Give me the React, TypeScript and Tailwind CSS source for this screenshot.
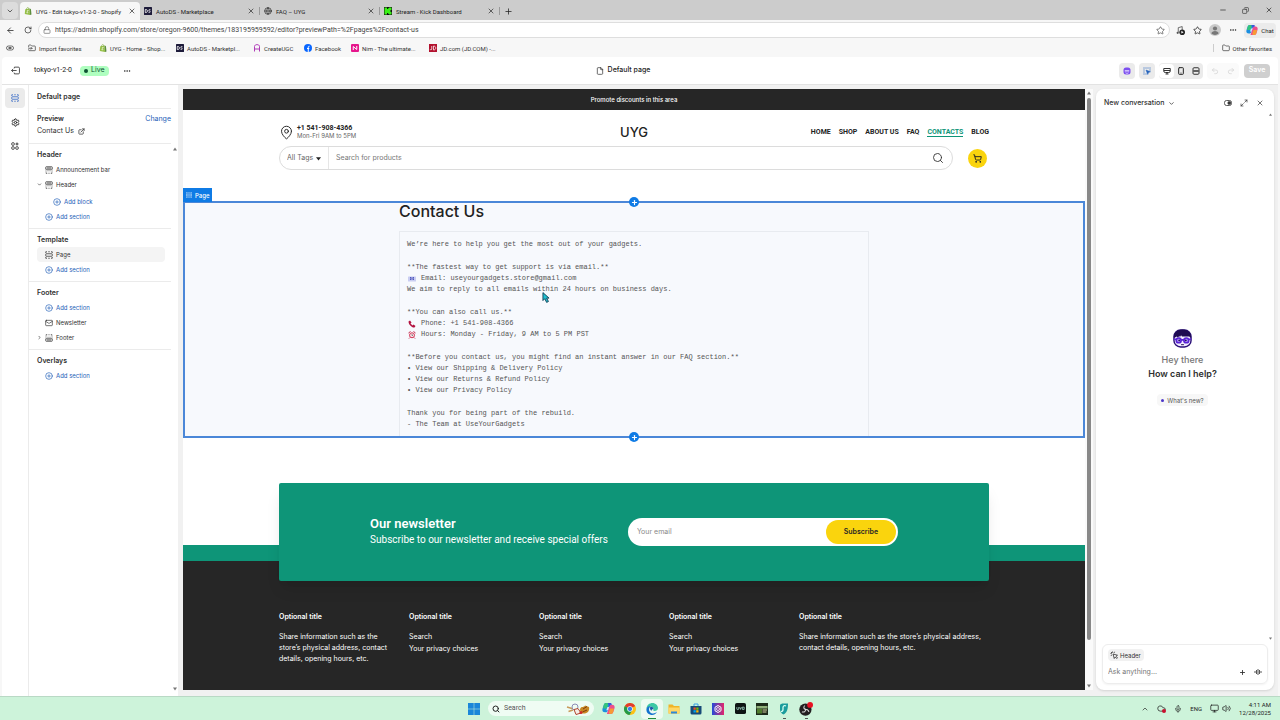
import React, { useState } from "react";
import {
  ArrowLeft,
  ChevronDown,
  ChevronRight,
  ChevronUp,
  CirclePlus,
  Cloud,
  Copy,
  Ellipsis,
  ExternalLink,
  File,
  Folder,
  FolderInput,
  Globe,
  Lock,
  Mail,
  MapPin,
  Maximize2,
  Mic,
  Minus,
  Monitor,
  Plus,
  Redo2,
  RotateCw,
  Search,
  Settings,
  ShoppingCart,
  Smartphone,
  Star,
  Undo2,
  Volume2,
  X,
} from "lucide-react";

interface IconProps {
  className?: string;
}

/* ---------- Icons ---------- */

const ShopifyIcon = ({ className = "size-2" }: IconProps) => (
  <svg viewBox="0 0 16 16" className={className}>
    <path d="M2.500 4.500 11 3l1 13-10.500-1.800z" fill="#95bf47" />
    <path d="M11 3l2.800 1.200L15 15l-3 1z" fill="#5e8e3e" />
    <path d="M5 5c0-5 4.500-5.500 4.500-1.200" fill="none" stroke="#7aa83a" strokeWidth="1.200" />
    <path d="M9 7c-3-1-3.500 1.500-2 2.300 2 1.200.5 3-2 1.800" fill="none" stroke="#fff" strokeWidth="1.400" />
  </svg>
);

const AutoDsIcon = ({ className = "size-2" }: IconProps) => (
  <svg viewBox="0 0 16 16" className={className}>
    <rect width="16" height="16" rx="1" fill="#1d1b3a" />
    <path d="M2.500 5v6h2c3 0 3-6 0-6zM13 5.500c-4-1.500-4.500 2-2 2.500s2 4-2 2.500" fill="none" stroke="#fff" strokeWidth="1.600" />
  </svg>
);

const KickIcon = ({ className = "size-2" }: IconProps) => (
  <svg viewBox="0 0 16 16" className={className}>
    <rect width="16" height="16" fill="#111" />
    <path d="M1 1h5v3h2V2.500h2V1h5v5h-2v4h2v5h-5v-1.500H8V12H6v3H1z" fill="#3bf018" />
  </svg>
);

const CopilotIcon = ({ className = "size-3" }: IconProps) => (
  <svg viewBox="0 0 24 24" className={className}>
    <path d="M8 2h7l-4 13c-1 3-2 4-5 4-5 0-6-3-5-7l2-6c1-3 2-4 5-4z" fill="#1a8fe0" />
    <path d="M8 2c3 0 4 1 3 4l-2 6H2l1-5c1-4 2-5 5-5z" fill="#35c47c" />
    <path d="M16 22H9l4-13c1-3 2-4 5-4 5 0 6 3 5 7l-2 6c-1 3-2 4-5 4z" fill="#ee4e8b" />
    <path d="M16 22c-3 0-4-1-3-4l2-6h7l-1 5c-1 4-2 5-5 5z" fill="#f79a35" />
    <path d="M11 2h4c2 0 3 1 3.500 3-3 0-4 1-5 4z" fill="#3a55d8" />
    <path d="M10 9h3l-2 6H8z" fill="#fff" opacity=".8" />
  </svg>
);

const SectionIcon = ({ className = "size-2" }: IconProps) => (
  <svg viewBox="0 0 16 16" className={className} fill="none" stroke="currentColor" strokeWidth="1.500">
    <path d="M1.500 4V1.500H4M6.500 1.500h3M12 1.500h2.500V4M1.500 12v2.500H4M6.500 14.500h3M12 14.500h2.500V12" />
    <rect x="1.500" y="5.500" width="13" height="5" rx="1" />
  </svg>
);

const HeaderIcon = ({ className = "size-2" }: IconProps) => (
  <svg viewBox="0 0 16 16" className={className} fill="none" stroke="currentColor" strokeWidth="1.500">
    <path d="M1.500 6.500v-4a1 1 0 0 1 1-1h11a1 1 0 0 1 1 1v4zM4 4h8" />
    <path d="M2 9v2M14 9v2M2 13v1.500h2.500M7 14.500h2M11.500 14.500H14V13M5 9.500h2M9 9.500h2" />
  </svg>
);

const FooterIcon = ({ className = "size-2" }: IconProps) => (
  <svg viewBox="0 0 16 16" className={className} fill="none" stroke="currentColor" strokeWidth="1.500">
    <path d="M1.500 9.500v4a1 1 0 0 0 1 1h11a1 1 0 0 0 1-1v-4zM4 12h8" />
    <path d="M2 7V5M14 7V5M2 3V1.500h2.500M7 1.500h2M11.500 1.500H14V3M5 6.500h2M9 6.500h2" />
  </svg>
);

const AppsIcon = ({ className = "size-2" }: IconProps) => (
  <svg viewBox="0 0 16 16" className={className} fill="none" stroke="currentColor" strokeWidth="1.700">
    <rect x="1.500" y="1.500" width="5" height="5" rx="1.500" />
    <rect x="1.500" y="9.500" width="5" height="5" rx="1.500" />
    <rect x="9.500" y="9.500" width="5" height="5" rx="1.500" />
    <path d="M12 1v6M9 4h6" />
  </svg>
);

const SidekickFace = ({ className = "size-[19px]" }: IconProps) => (
  <svg viewBox="0 0 40 40" className={className}>
    <rect x="2" y="2" width="36" height="36" rx="14" fill="#f1ecff" stroke="#2a0f78" strokeWidth="3" />
    <path d="M2 19C1 7 9 1 20 1s19 6 18 18l-4-3H19l-2-3-3 5v-4l-4 4-2-2z" fill="#1e0b52" />
    <g fill="#b79cff" stroke="#5a22d6" strokeWidth="3.500">
      <circle cx="12" cy="24" r="5" />
      <circle cx="28" cy="24" r="5" />
    </g>
    <path d="M17 23h6M2 21l5 1M38 21l-5 1" stroke="#5a22d6" strokeWidth="3.500" />
    <circle cx="13" cy="24" r="1.800" fill="#1e0b52" />
    <circle cx="27" cy="24" r="1.800" fill="#1e0b52" />
    <path d="M17 33h6" stroke="#1e0b52" strokeWidth="2" />
  </svg>
);

const SidekickOutline = () => (
  <svg viewBox="0 0 16 16" className="size-2">
    <rect x="1" y="1" width="14" height="14" rx="5" fill="#7c4ff0" />
    <path d="M3.500 6.500h9v2.500h-9z" fill="#e9e1ff" />
    <path d="M5 11.500c2 1.500 4 1.500 6 0" stroke="#fff" strokeWidth="1.300" fill="none" />
  </svg>
);

const InspectIcon = () => (
  <svg viewBox="0 0 16 16" className="size-2">
    <path d="M1 2h2M5 2h2M9 2h2M13 2h2M1 6h2M1 10h2M1 14h2M5 14h2M14 5v2" fill="none" stroke="#2463bc" strokeWidth="2" />
    <path d="M6 6l9 3.500-4 1.500-1.500 4z" fill="#2463bc" stroke="#2463bc" />
  </svg>
);

const SelectIcon = ({ className = "size-2" }: IconProps) => (
  <svg viewBox="0 0 16 16" className={className} fill="none" stroke="currentColor" strokeWidth="1.600">
    <path d="M5 1v2.500M1 5h2.500M2 2l2 2M9 1.500L8 4M1.500 9L4 8" />
    <path d="M6 6l2.500 9 2-3 3 3 1.500-1.500-3-3 3-2z" />
  </svg>
);

const Triangle = ({ className = "size-1" }: IconProps) => (
  <svg viewBox="0 0 8 8" className={className}>
    <path d="M0 7l4-6 4 6z" fill="#777" />
  </svg>
);

/* ---------- Browser chrome ---------- */

const tabs = [
  { title: "UYG - Edit tokyo-v1-2-0 - Shopify", icon: <ShopifyIcon className="size-2 shrink-0" />, active: true },
  { title: "AutoDS - Marketplace", icon: <AutoDsIcon /> },
  { title: "FAQ – UYG", icon: <Globe className="size-2" /> },
  { title: "Stream - Kick Dashboard", icon: <KickIcon /> },
];

const TabStrip = () => (
  <div className="flex h-5 items-end bg-[#cccccc] pl-[2px] text-[6px]">
    <button aria-label="Tab actions" className="mb-px grid h-[17px] w-4 place-items-center rounded bg-[#dcdcdc]">
      <ChevronDown className="size-2" />
    </button>
    <div className="ml-[2px] flex h-[18px]">
      {tabs.map((tab) => (
        <div
          key={tab.title}
          className={
            tab.active
              ? "flex w-[120px] items-center gap-1 rounded-t bg-[#f7f7f7] pr-1 pl-1"
              : "flex w-[120px] items-center gap-1 pl-1"
          }
        >
          {tab.icon}
          <span className="flex-1 whitespace-nowrap">{tab.title}</span>
          <button aria-label="Close tab">
            <X className="size-2" />
          </button>
          {!tab.active && <span className="h-2 w-px bg-[#999]" />}
        </div>
      ))}
      <button aria-label="New tab" className="ml-[2px] grid w-3 place-items-center">
        <Plus className="size-[9px]" />
      </button>
    </div>
    <div className="ml-auto flex h-full items-center">
      <button aria-label="Minimize" className="grid w-[23px] place-items-center"><Minus className="size-2" /></button>
      <button aria-label="Restore" className="grid w-[23px] place-items-center"><Copy className="size-[7px] -scale-x-100" /></button>
      <button aria-label="Close" className="grid w-[23px] place-items-center"><X className="size-2" /></button>
    </div>
  </div>
);

const AddressBar = () => (
  <div className="flex h-[19px] items-center bg-[#f7f7f7] pt-px pr-1 pl-[5px]">
    <button aria-label="Back" className="grid w-[10px] place-items-center"><ArrowLeft className="size-[9px]" /></button>
    <button aria-label="Reload" className="ml-2 grid w-[10px] place-items-center"><RotateCw className="size-2" /></button>
    <div className="ml-[5px] flex h-4 flex-1 items-center gap-1 rounded-full border border-[#dedede] bg-white px-1">
      <Lock className="size-2 text-[#666]" />
      <input
        aria-label="Address"
        className="flex-1 text-[7px] text-[#444] outline-none"
        defaultValue="https://admin.shopify.com/store/oregon-9600/themes/183195959592/editor?previewPath=%2Fpages%2Fcontact-us"
      />
      <Star className="size-[9px] text-[#555]" />
    </div>
    <div className="ml-px flex items-center">
      <button aria-label="Media" className="grid w-[18px] place-items-center">
        <svg viewBox="0 0 16 16" className="size-[9px]">
          <path d="M4 11V3l7-2v6" fill="none" stroke="#555" strokeWidth="1.500" />
          <circle cx="3" cy="12" r="2" fill="#555" />
          <circle cx="11" cy="11" r="5" fill="#222" />
          <path d="M9.500 8.500l4 2.500-4 2.500z" fill="#fff" />
        </svg>
      </button>
      <button aria-label="Favorites" className="grid w-[17px] place-items-center"><Star className="size-[9px]" /></button>
      <button aria-label="Profile" className="grid w-[18px] place-items-center">
        <svg viewBox="0 0 20 20" className="size-3">
          <circle cx="10" cy="10" r="10" fill="#c9c9c9" />
          <circle cx="10" cy="7.500" r="3.500" fill="#777" />
          <path d="M4 16c0-6 12-6 12 0-3 3-9 3-12 0z" fill="#777" />
        </svg>
      </button>
      <button aria-label="More" className="grid w-[18px] place-items-center"><Ellipsis className="size-2" /></button>
      <button className="ml-[2px] flex h-[15px] w-8 items-center justify-center gap-[3px] rounded bg-[#ebebeb] text-[6px]">
        <CopilotIcon /> Chat
      </button>
    </div>
  </div>
);

const CreateUgcIcon = () => (
  <svg viewBox="0 0 16 16" className="size-2">
    <path d="M3 15V5c0-5 10-5 10 0v10M3 10h10" fill="none" stroke="#b03bb8" strokeWidth="2" />
  </svg>
);

const FacebookIcon = () => (
  <svg viewBox="0 0 16 16" className="size-2">
    <circle cx="8" cy="8" r="8" fill="#0866ff" />
    <path d="M8.500 16V6.500C8.500 5 9 4.500 11 4.500M6 9h4.500" fill="none" stroke="#fff" strokeWidth="2" />
  </svg>
);

const NimIcon = () => (
  <svg viewBox="0 0 16 16" className="size-2">
    <rect width="16" height="16" rx="2" fill="#e6168c" />
    <path d="M4.500 12V5l7 6V4" fill="none" stroke="#fff" strokeWidth="2" />
  </svg>
);

const JdIcon = () => (
  <svg viewBox="0 0 16 16" className="size-2">
    <rect width="16" height="16" fill="#b3122f" />
    <path d="M5.500 4v6c0 2-3 2-3.500.5M9 4v8c6 0 6-8 0-8z" fill="none" stroke="#fff" strokeWidth="1.500" />
  </svg>
);

const FavoritesBar = () => (
  <nav aria-label="Favorites bar" className="flex h-[18px] items-center bg-[#f7f7f7] pr-2 pl-[6px] text-[6px] text-[#333]">
    <svg viewBox="0 0 16 16" className="size-2" fill="none" stroke="#333" strokeWidth="1.400">
      <rect x="1" y="4" width="14" height="8" rx="4" />
      <path d="M5 8h6" strokeWidth="3" />
    </svg>
    <a href="#" className="ml-[14px] flex w-[71px] items-center gap-[3px]"><FolderInput className="size-2" />Import favorites</a>
    <a href="#" className="flex w-[77px] items-center gap-[3px]"><ShopifyIcon />UYG - Home - Shop...</a>
    <a href="#" className="flex w-[77px] items-center gap-[3px]"><AutoDsIcon />AutoDS - Marketpl...</a>
    <a href="#" className="flex w-[51px] items-center gap-[3px]"><CreateUgcIcon />CreateUGC</a>
    <a href="#" className="flex w-[47px] items-center gap-[3px]"><FacebookIcon />Facebook</a>
    <a href="#" className="flex w-[78px] items-center gap-[3px]"><NimIcon />Nim - The ultimate...</a>
    <a href="#" className="flex items-center gap-[3px]"><JdIcon />JD.com (JD.COM) -...</a>
    <span className="ml-auto h-2 w-px bg-[#ccc]" />
    <a href="#" className="ml-2 flex items-center gap-[3px]"><Folder className="size-2" />Other favorites</a>
  </nav>
);

/* ---------- Editor ---------- */

const EditorTopBar = () => (
  <header className="grid h-7 grid-cols-[1fr_auto_1fr] items-center rounded-t border-b border-[#e3e3e3] bg-white px-2 text-[7px]">
    <div className="flex items-center">
      <button aria-label="Exit editor" className="ml-px">
        <svg viewBox="0 0 16 16" className="size-[9px]" fill="none" stroke="#333" strokeWidth="1.500">
          <path d="M6 4V2h7a2 2 0 0 1 2 2v8a2 2 0 0 1-2 2H6v-2M10 8H1M4 5L1 8l3 3" />
        </svg>
      </button>
      <span className="ml-[14px] font-['Roboto',sans-serif]">tokyo-v1-2-0</span>
      <span className="ml-2 flex h-[10px] items-center gap-[3px] rounded bg-[#affebf] px-1 text-[#0c5132]">
        <span className="size-1 rounded-full bg-[#0c5132]" />
        Live
      </span>
      <button aria-label="More actions" className="ml-[14px]"><Ellipsis className="size-2" /></button>
    </div>
    <div className="mr-[34px] flex items-center gap-1 font-medium">
      <File className="size-2" />
      Default page
    </div>
    <div className="flex items-center justify-end">
      <button aria-label="Sidekick" className="grid size-4 place-items-center rounded bg-[#ebebeb]"><SidekickOutline /></button>
      <button aria-label="Inspector" className="ml-1 grid size-4 place-items-center rounded bg-[#ebebeb]"><InspectIcon /></button>
      <div className="ml-1 flex h-4 items-center rounded bg-[#ebebeb]">
        <button aria-label="Desktop" className="grid h-[14px] w-[15px] place-items-center rounded bg-white">
          <svg viewBox="0 0 16 16" className="size-2" fill="none" stroke="#333" strokeWidth="2">
            <path d="M1.500 3h13v5a3 3 0 0 1-3 3h-7a3 3 0 0 1-3-3zM2 7h12M8 11v3M5 14h6" />
          </svg>
        </button>
        <button aria-label="Mobile" className="grid w-[14px] place-items-center"><Smartphone className="size-2" strokeWidth={3} /></button>
        <button aria-label="Full width" className="grid w-[15px] place-items-center">
          <svg viewBox="0 0 16 16" className="size-2" fill="none" stroke="#333" strokeWidth="2">
            <rect x="2" y="1.500" width="12" height="13" rx="2" />
            <path d="M2 8h12M6 6v4M10 6v4" />
          </svg>
        </button>
      </div>
      <div className="ml-1 flex h-4 items-center rounded bg-[#fafafa] text-[#d0d0d0]">
        <button aria-label="Undo" className="grid w-4 place-items-center"><Undo2 className="size-2" /></button>
        <button aria-label="Redo" className="grid w-4 place-items-center"><Redo2 className="size-2" /></button>
      </div>
      <button className="ml-[5px] h-[14px] w-[26px] rounded bg-[#cfcfcf] font-semibold text-white">Save</button>
    </div>
  </header>
);

const Rail = () => (
  <nav aria-label="Editor panels" className="flex w-[27px] shrink-0 flex-col items-center gap-1 border-r border-[#ebebeb] bg-white pt-[3px]">
    <button aria-label="Sections" className="grid size-5 place-items-center rounded bg-[#ebebeb] text-[#2b63c4]"><SectionIcon /></button>
    <button aria-label="Theme settings" className="grid size-5 place-items-center"><Settings className="size-[9px]" strokeWidth={2.5} /></button>
    <button aria-label="App embeds" className="grid size-5 place-items-center"><AppsIcon /></button>
  </nav>
);

const AddButton = ({ label, nested }: { label: string; nested?: boolean }) => (
  <button
    className={
      nested
        ? "mt-[2px] flex h-[15px] items-center gap-[3px] pl-4 text-[#2460b8]"
        : "flex h-[15px] items-center gap-[3px] pl-2 text-[#2460b8]"
    }
  >
    <CirclePlus className="size-2" />
    {label}
  </button>
);

interface SectionRowProps {
  label: string;
  icon: React.ReactNode;
  caret?: React.ReactNode;
  selected?: boolean;
}

const SectionRow = ({ label, icon, caret, selected }: SectionRowProps) => (
  <button
    className={
      selected
        ? "flex h-[15px] w-32 items-center gap-[3px] rounded bg-[#f4f4f4]"
        : "flex h-[15px] w-32 items-center gap-[3px]"
    }
  >
    <span className="w-[5px]">{caret}</span>
    {icon}
    {label}
  </button>
);

const SectionGroup = ({ title, children }: { title: string; children: React.ReactNode }) => (
  <div className="flex flex-col items-start border-t border-[#ebebeb] pt-1 pb-1 pl-2">
    <h3 className="h-[14px] text-[7px] leading-[14px] font-semibold">{title}</h3>
    {children}
  </div>
);

const Sidebar = () => (
  <aside className="flex w-[149px] shrink-0 flex-col bg-white text-[6px] text-[#303030]">
    <h2 className="mr-[7px] ml-2 h-6 border-b border-[#ebebeb] text-[7px] leading-6 font-semibold">Default page</h2>
    <div className="mr-[7px] flex h-[34px] flex-col justify-center pb-px pl-2 text-[7px]">
      <div className="flex h-3 items-center justify-between">
        <span className="font-semibold">Preview</span>
        <a href="#" className="text-[#2460b8]">Change</a>
      </div>
      <a href="#" className="flex h-3 items-center gap-1">
        Contact Us <ExternalLink className="size-[7px]" strokeWidth={2.5} />
      </a>
    </div>
    <div className="flex flex-1">
      <div className="flex-1">
        <SectionGroup title="Header">
          <SectionRow label="Announcement bar" icon={<HeaderIcon />} />
          <SectionRow label="Header" icon={<HeaderIcon />} caret={<ChevronDown className="size-[5px]" strokeWidth={3} />} />
          <AddButton label="Add block" nested />
          <AddButton label="Add section" />
        </SectionGroup>
        <SectionGroup title="Template">
          <SectionRow label="Page" icon={<SectionIcon />} selected />
          <AddButton label="Add section" />
        </SectionGroup>
        <SectionGroup title="Footer">
          <AddButton label="Add section" />
          <SectionRow label="Newsletter" icon={<Mail className="size-2" />} />
          <SectionRow label="Footer" icon={<FooterIcon />} caret={<ChevronRight className="size-[5px]" strokeWidth={3} />} />
        </SectionGroup>
        <SectionGroup title="Overlays">
          <AddButton label="Add section" />
        </SectionGroup>
      </div>
      <div className="flex w-[7px] flex-col items-center justify-between pt-1 pb-[5px]">
        <Triangle />
        <Triangle className="size-1 rotate-180" />
      </div>
    </div>
  </aside>
);

/* ---------- Store preview ---------- */

const navLinks = ["HOME", "SHOP", "ABOUT US", "FAQ", "CONTACTS", "BLOG"];

const StoreHeader = () => (
  <header className="mx-auto w-[710px] max-w-full pt-[10px] pb-[31px]">
    <div className="grid h-6 grid-cols-[1fr_auto_1fr] items-center">
      <div className="flex items-center gap-[3px]">
        <MapPin className="size-[15px]" strokeWidth={1.5} />
        <div className="leading-[8px]">
          <p className="font-['Roboto',sans-serif] text-[7px] font-bold">+1 541-908-4366</p>
          <p className="text-[6px] text-[#666]">Mon-Fri 9AM to 5PM</p>
        </div>
      </div>
      <a href="#" className="text-[13px] leading-4 font-medium">UYG</a>
      <nav className="flex justify-end gap-2 font-['Roboto',sans-serif] text-[7px] font-bold">
        {navLinks.map((link) => (
          <a
            key={link}
            href="#"
            className={link === "CONTACTS" ? "border-b border-[#0e9578] leading-[8px] text-[#0e9578]" : "border-b border-transparent leading-[8px]"}
          >
            {link}
          </a>
        ))}
      </nav>
    </div>
    <div className="mt-[2px] flex items-center">
      <div className="flex h-6 flex-1 items-center rounded-full border border-[#dcdcdc] text-[7px] text-[#666]">
        <div className="relative flex h-full w-[49px] items-center border-r border-[#e6e6e6] pl-[7px]">
          <select aria-label="Tags" className="w-full appearance-none outline-none">
            <option>All Tags</option>
          </select>
          <svg viewBox="0 0 8 8" className="pointer-events-none absolute right-[7px] size-[5px]"><path d="M0 2h8L4 7z" fill="#222" /></svg>
        </div>
        <input aria-label="Search for products" placeholder="Search for products" className="flex-1 px-[7px] outline-none placeholder:text-[#777]" />
        <button aria-label="Search" className="pr-2"><Search className="size-3 text-[#333]" strokeWidth={1.8} /></button>
      </div>
      <button aria-label="Cart" className="mr-[2px] ml-[15px] grid size-[19px] place-items-center rounded-full bg-[#fad40d]">
        <ShoppingCart className="size-[9px]" strokeWidth={2.5} />
      </button>
    </div>
  </header>
);

const EmailEmoji = () => (
  <svg viewBox="0 0 16 16" className="size-2">
    <rect y="3" width="16" height="10" rx="1" fill="#c9cdf2" />
    <path d="M4 4h8v6H4z" fill="#5058c0" />
    <circle cx="8" cy="7" r="2" fill="none" stroke="#fff" />
  </svg>
);

const PhoneEmoji = () => (
  <svg viewBox="0 0 16 16" className="size-2">
    <path d="M1 3l3-2 3 4-2 2 4 4 2-2 4 3-2 3C8 16 1 9 1 3z" fill="#b3123f" />
  </svg>
);

const ClockEmoji = () => (
  <svg viewBox="0 0 16 16" className="size-2">
    <path d="M1 4l4-3M15 4l-4-3M4 13l-2 2M12 13l2 2" stroke="#c2264a" strokeWidth="2" />
    <circle cx="8" cy="8.500" r="5" fill="#f7dfe4" stroke="#d23455" strokeWidth="2" />
    <path d="M8 6v3h2" fill="none" stroke="#333" />
  </svg>
);

const EmojiLine = ({ icon, children }: { icon: React.ReactNode; children: React.ReactNode }) => (
  <p className="flex items-center gap-[5px] pl-px">
    {icon}
    {children}
  </p>
);

const InsertHandle = ({ className }: { className: string }) => (
  <button aria-label="Add section here" className={className}>
    <Plus className="size-[7px]" strokeWidth={4} />
  </button>
);

const PageSection = () => (
  <section className="relative h-[237px] border-2 border-[#4b87d8] bg-[#f7f9fd]">
    <span className="absolute -top-[15px] -left-[2px] flex h-[14px] items-center gap-[3px] bg-[#0f7be5] px-[3px] text-[6px] font-medium text-white">
      <SectionIcon className="size-[6px]" />
      Page
    </span>
    <InsertHandle className="absolute -top-[6px] left-1/2 grid size-[10px] -translate-x-1/2 place-items-center rounded-full bg-[#0f7be5] text-white" />
    <InsertHandle className="absolute -bottom-[6px] left-1/2 grid size-[10px] -translate-x-1/2 place-items-center rounded-full bg-[#0f7be5] text-white" />
    <div className="mx-auto flex h-full w-[470px] max-w-full flex-col">
      <h1 className="mb-3 text-[16px] leading-4 font-medium">Contact Us</h1>
      <div className="relative flex flex-1 flex-col gap-3 border border-b-0 border-[#e8ebf0] px-[7px] pt-[7px] font-['Liberation_Mono',monospace] text-[7px] leading-[11px] text-[#555]">
        <p>We’re here to help you get the most out of your gadgets.</p>
        <div>
          <p>**The fastest way to get support is via email.**</p>
          <EmojiLine icon={<EmailEmoji />}>Email: useyourgadgets.store@gmail.com</EmojiLine>
          <p>We aim to reply to all emails within 24 hours on business days.</p>
        </div>
        <div>
          <p>**You can also call us.**</p>
          <EmojiLine icon={<PhoneEmoji />}>Phone: +1 541-908-4366</EmojiLine>
          <EmojiLine icon={<ClockEmoji />}>Hours: Monday - Friday, 9 AM to 5 PM PST</EmojiLine>
        </div>
        <div>
          <p>**Before you contact us, you might find an instant answer in our FAQ section.**</p>
          <p>• View our Shipping & Delivery Policy</p>
          <p>• View our Returns & Refund Policy</p>
          <p>• View our Privacy Policy</p>
        </div>
        <div>
          <p>Thank you for being part of the rebuild.</p>
          <p>- The Team at UseYourGadgets</p>
        </div>
        <svg viewBox="0 0 12 18" className="absolute top-[60px] left-[142px] h-[11px] w-2">
          <path d="M1 1v13l3-3 3 6 3-1.500-3-5.500h4z" fill="#20c0d0" stroke="#153f55" strokeWidth="1.500" />
        </svg>
      </div>
    </div>
  </section>
);

const Newsletter = () => {
  const [email, setEmail] = useState("");

  return (
    <section className="relative z-10 mx-auto mt-[45px] -mb-[36px] flex h-[98px] w-[710px] max-w-full items-center justify-center gap-5 rounded-xs bg-[#0e9578] text-white shadow-lg">
      <div className="font-['Roboto',sans-serif] text-[10px] leading-4">
        <h2 className="text-[13px] font-semibold">Our newsletter</h2>
        <p>Subscribe to our newsletter and receive special offers</p>
      </div>
      <form
        onSubmit={(e) => e.preventDefault()}
        className="flex h-7 w-[270px] rounded-full bg-white p-[2px] text-[7px]"
      >
        <input
          type="email"
          aria-label="Your email"
          placeholder="Your email"
          value={email}
          onChange={(e) => setEmail(e.target.value)}
          className="min-w-0 flex-1 px-[7px] text-[#222] outline-none placeholder:text-[#888]"
        />
        <button className="w-[70px] rounded-full bg-[#fad40d] font-semibold text-[#262626]">Subscribe</button>
      </form>
    </section>
  );
};

const LinkColumn = () => (
  <div>
    <h3 className="mb-[9px] font-semibold">Optional title</h3>
    <ul>
      <li className="h-3"><a href="#">Search</a></li>
      <li><a href="#">Your privacy choices</a></li>
    </ul>
  </div>
);

const InfoColumn = () => (
  <div>
    <h3 className="mb-[9px] font-semibold">Optional title</h3>
    <p>Share information such as the store’s physical address, contact details, opening hours, etc.</p>
  </div>
);

const StoreFooter = () => (
  <footer className="flex-1 border-t-[16px] border-[#0e9578] bg-[#262626] pt-[50px] text-[7px] leading-[11px] text-white">
    <div className="mx-auto grid w-[710px] max-w-full grid-cols-[114px_114px_114px_114px_1fr] gap-4">
      <InfoColumn />
      <LinkColumn />
      <LinkColumn />
      <LinkColumn />
      <InfoColumn />
    </div>
  </footer>
);

const Preview = () => (
  <main className="ml-[5px] flex min-w-0 flex-1 bg-white">
    <div className="flex flex-1 flex-col overflow-hidden bg-white">
      <p className="h-[21px] bg-[#262626] text-center text-[6px] leading-[21px] font-medium text-white">
        Promote discounts in this area
      </p>
      <StoreHeader />
      <PageSection />
      <Newsletter />
      <StoreFooter />
    </div>
    <div className="flex w-2 flex-col items-center bg-[#fafafa] py-[2px]">
      <Triangle />
      <span className="mt-[3px] w-1 flex-1 rounded-full bg-[#888]" />
      <Triangle className="mt-11 size-1 rotate-180" />
    </div>
  </main>
);

/* ---------- Assistant ---------- */

const Assistant = () => (
  <aside className="mr-1 ml-[3px] flex w-[178px] shrink-0 flex-col rounded-lg bg-white text-[7px] text-[#303030] shadow-sm">
    <div className="flex h-[22px] shrink-0 items-center pt-[6px] pr-[10px] pl-2">
      <button className="flex items-center gap-1 font-medium">
        New conversation <ChevronDown className="size-[7px]" strokeWidth={2.5} />
      </button>
      <div className="ml-auto flex items-center gap-2">
        <button aria-label="Dock">
          <svg viewBox="0 0 16 16" className="size-2" fill="none" stroke="#333" strokeWidth="1.600">
            <rect x="1" y="3" width="14" height="10" rx="4" />
            <rect x="8" y="5.500" width="5" height="5" rx="1" fill="#333" />
          </svg>
        </button>
        <button aria-label="Expand"><Maximize2 className="size-2" /></button>
        <button aria-label="Close assistant"><X className="size-2" /></button>
      </div>
    </div>
    <div className="flex flex-1">
      <div className="flex flex-1 flex-col items-center pt-[218px] text-[9px]">
        <SidekickFace />
        <p className="mt-[5px] leading-[14px] font-medium text-[#777]">Hey there</p>
        <p className="leading-[14px] font-semibold">How can I help?</p>
        <button className="mt-[13px] flex h-3 items-center gap-[3px] rounded bg-[#f7f7f7] px-1 text-[6px] text-[#555]">
          <span className="size-[3px] rounded-full bg-[#4b35c8]" />
          What's new?
        </button>
      </div>
      <div className="flex w-[5px] flex-col justify-between pt-[2px]">
        <Triangle className="size-[3px]" />
        <Triangle className="size-[3px] rotate-180" />
      </div>
    </div>
    <div className="m-[6px] mt-1 rounded-md border border-[#ededed] px-[5px] py-1 shadow-xs">
      <span className="flex h-3 w-9 items-center gap-[2px] rounded bg-[#f1f1f1] px-[2px] text-[6px]">
        <SelectIcon className="size-2 shrink-0" />
        Header
      </span>
      <div className="mt-[5px] mb-px flex h-3 items-center gap-2">
        <input aria-label="Ask anything" placeholder="Ask anything..." className="min-w-0 flex-1 outline-none placeholder:text-[#777]" />
        <button aria-label="Add attachment"><Plus className="size-[7px]" strokeWidth={3} /></button>
        <button aria-label="Voice">
          <svg viewBox="0 0 16 16" className="size-2" stroke="#444" strokeWidth="1.800">
            <path d="M2 6v4M5 4v8M8 2v12M11 4v8M14 6v4" />
          </svg>
        </button>
      </div>
    </div>
  </aside>
);

/* ---------- Taskbar ---------- */

const taskbarIcons = [
  { name: "Copilot", icon: <CopilotIcon className="size-[13px]" /> },
  {
    name: "Chrome",
    icon: (
      <svg viewBox="0 0 24 24" className="size-3">
        <circle cx="12" cy="12" r="12" fill="#fbc116" />
        <path d="M12 12L1.600 6a12 12 0 0 1 20.800 0z" fill="#e33b2e" />
        <path d="M12 12L1.600 6a12 12 0 0 0 9.400 18l5-9z" fill="#229a4a" />
        <circle cx="12" cy="12" r="5.500" fill="#fff" />
        <circle cx="12" cy="12" r="4.300" fill="#3b7de9" />
      </svg>
    ),
  },
  {
    name: "Edge",
    active: true,
    icon: (
      <svg viewBox="0 0 24 24" className="size-3">
        <path d="M1 12C1 4 7 0 13 0c6 0 11 5 11 10 0 4-3 6-7 6-3 0-3-2-2-3 1-3-2-6-6-6-4 0-7 2-8 5z" fill="#3cc7a4" />
        <path d="M1 12c1-4 4-6 8-5-3 2-5 9 1 13 4 2 8 1 12-2-3 5-8 7-13 5.500C3 22 0 17 1 12z" fill="#1273cf" />
        <path d="M9 7c4 0 7 3 6 6-2-1-4 0-4 3-3-3-4-6-2-9z" fill="#1b57a8" />
      </svg>
    ),
  },
  {
    name: "File Explorer",
    icon: (
      <svg viewBox="0 0 24 24" className="size-3">
        <path d="M1 3h8l3 3h11v15H1z" fill="#f0b429" />
        <path d="M1 9h22v12H1z" fill="#ffd766" />
        <path d="M6 17h12v4H6z" fill="#2c88d9" />
      </svg>
    ),
  },
  {
    name: "Store",
    icon: (
      <svg viewBox="0 0 24 24" className="size-3">
        <path d="M8 7V2h8v5" fill="none" stroke="#3ba0e6" strokeWidth="2" />
        <path d="M1 6h22v14a3 3 0 0 1-3 3H4a3 3 0 0 1-3-3z" fill="#174a78" />
        <path d="M7 9h4.500v4.500H7z" fill="#f25022" />
        <path d="M12.500 9H17v4.500h-4.500z" fill="#7fba00" />
        <path d="M7 14.500h4.500V19H7z" fill="#00a4ef" />
        <path d="M12.500 14.500H17V19h-4.500z" fill="#ffb900" />
      </svg>
    ),
  },
  {
    name: "Recorder",
    icon: (
      <svg viewBox="0 0 24 24" className="size-3">
        <defs>
          <linearGradient id="rec">
            <stop stopColor="#234bd8" />
            <stop offset="1" stopColor="#e3256b" />
          </linearGradient>
        </defs>
        <rect width="24" height="24" fill="url(#rec)" />
        <path d="M12 5l6 3.500v7L12 19l-6-3.500v-7z" fill="none" stroke="#fff" strokeWidth="2" />
        <circle cx="12" cy="12" r="3" fill="none" stroke="#fff" strokeWidth="1.500" />
      </svg>
    ),
  },
  {
    name: "Audio",
    icon: (
      <svg viewBox="0 0 24 24" className="size-[11px]">
        <rect width="24" height="24" rx="4" fill="#0d1413" />
        <path d="M4 9v4c0 2 4 2 4 0V9M10 9l2 5 2-5M16 9h4v5h-4z" fill="none" stroke="#b8efe0" strokeWidth="1.500" />
      </svg>
    ),
  },
  {
    name: "Game",
    icon: (
      <svg viewBox="0 0 24 24" className="size-3">
        <rect width="24" height="24" fill="#1d2a1a" />
        <path d="M1 6h22v5H1z" fill="#8fb07a" />
        <path d="M2 12h10v9H2z" fill="#4f7c2d" />
        <path d="M13 14h9M13 18h8" stroke="#d9d3a5" strokeWidth="2" />
      </svg>
    ),
  },
  {
    name: "VPN",
    running: true,
    icon: (
      <svg viewBox="0 0 24 24" className="size-3">
        <path d="M4 5c0-3 3-4 8-4h8c0 12-2 18-9 22-4-2-6-5-7-9z" fill="#1b9c9c" />
        <path d="M16 6c-3-2-6 0-6 3v4c0 3-2 4-4 4" fill="none" stroke="#d8fff4" strokeWidth="2.500" />
      </svg>
    ),
  },
  {
    name: "OBS",
    running: true,
    icon: (
      <svg viewBox="0 0 24 24" className="size-[14px]">
        <circle cx="11" cy="13" r="10.500" fill="#231f20" />
        <path d="M10 6c-3 3-2 6 2 7M5 17c4 1 7-1 6-5M17 17c-1-4-4-5-6-3" fill="none" stroke="#ddd" strokeWidth="1.800" />
        <circle cx="19" cy="5" r="5" fill="#e81123" />
      </svg>
    ),
  },
];

const Taskbar = () => (
  <footer className="grid h-6 shrink-0 grid-cols-[1fr_auto_1fr] items-center border-t border-[#b9d9c5] bg-[#cdf3da] text-[6px] text-[#222]">
    <span />
    <div className="flex items-center">
      <button aria-label="Start" className="grid w-[22px] place-items-center">
        <svg viewBox="0 0 24 24" className="size-3">
          <path d="M0 0h11.500v11.500H0zM12.500 0H24v11.500H12.500zM0 12.500h11.500V24H0zM12.500 12.500H24V24H12.500z" fill="#1a86d9" />
        </svg>
      </button>
      <label className="mr-[3px] ml-[3px] flex h-[15px] w-[106px] items-center gap-1 rounded-full bg-[#effcf3] px-1">
        <Search className="size-2" strokeWidth={3} />
        <input placeholder="Search" className="min-w-0 flex-1 text-[7px] outline-none placeholder:text-[#555]" />
        <svg viewBox="0 0 48 24" className="h-3 w-6">
          <path d="M2 8l10 3M5 17l9-3" stroke="#c89b5a" strokeWidth="3" />
          <circle cx="18" cy="8" r="6" fill="none" stroke="#8b8bb5" strokeWidth="2" />
          <path d="M16 13l8-2 6 9-10 3z" fill="#f5eee6" stroke="#b0442c" strokeWidth="2" />
          <path d="M28 12c3-7 8-2 10-7l8 3c2 8-4 14-12 13-4 0-6-3-6-9z" fill="#c88722" />
          <path d="M34 12l8-5M33 18l9-4" stroke="#7d3c12" strokeWidth="2" />
          <circle cx="30" cy="19" r="3" fill="#d12b2b" />
        </svg>
      </label>
      {taskbarIcons.map((app) => (
        <button
          key={app.name}
          aria-label={app.name}
          className={
            app.active
              ? "relative grid h-5 w-[22px] place-items-center rounded bg-[#ecfaf0]"
              : "relative grid h-5 w-[22px] place-items-center"
          }
        >
          {app.icon}
          {app.active && <span className="absolute bottom-0 h-px w-2 bg-[#1f8a3b]" />}
          {app.running && <span className="absolute bottom-0 h-px w-[3px] bg-[#555]" />}
        </button>
      ))}
    </div>
    <div className="flex items-center justify-end pr-[9px]">
      <ChevronUp className="size-2" />
      <span className="relative ml-2">
        <Cloud className="size-[9px]" />
        <span className="absolute right-0 bottom-0 size-1 rounded-full bg-[#c8102e]" />
      </span>
      <Mic className="ml-2 size-2" />
      <span className="ml-2">ENG</span>
      <Monitor className="ml-2 size-[9px]" />
      <Volume2 className="ml-[3px] size-[9px]" />
      <div className="ml-2 text-right leading-[8px]">
        <p>4:11 AM</p>
        <p>12/28/2025</p>
      </div>
    </div>
  </footer>
);

export default function App() {
  return (
    <div className="flex h-screen flex-col overflow-hidden bg-[#f7f7f7] font-['Roboto','Open_Sans',sans-serif] text-[#222]">
      <TabStrip />
      <AddressBar />
      <FavoritesBar />
      <div className="mx-[2px] flex min-h-0 flex-1 flex-col font-['Inter',sans-serif]">
        <EditorTopBar />
        <div className="flex min-h-0 flex-1 bg-[#f1f1f1]">
          <Rail />
          <Sidebar />
          <div className="flex min-w-0 flex-1 pt-1 pb-[6px]">
            <Preview />
            <Assistant />
          </div>
        </div>
      </div>
      <Taskbar />
    </div>
  );
}
